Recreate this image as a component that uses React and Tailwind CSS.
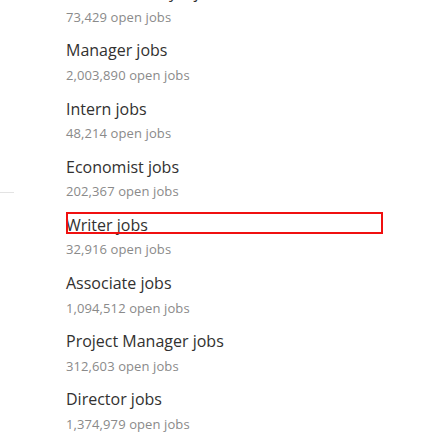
const JOBS = [
  { title: 'Business Analyst jobs', count: '73,429' },
  { title: 'Manager jobs', count: '2,003,890' },
  { title: 'Intern jobs', count: '48,214' },
  { title: 'Economist jobs', count: '202,367' },
  { title: 'Writer jobs', count: '32,916', highlight: true },
  { title: 'Associate jobs', count: '1,094,512' },
  { title: 'Project Manager jobs', count: '312,603' },
  { title: 'Director jobs', count: '1,374,979' },
];

function JobRow({ title, count, highlight }) {
  return (
    <li className="pb-[11.7px]">
      <div className="relative text-[16px] leading-6 font-medium text-[#323130]">
        {title}
        {highlight && (
          <span className="absolute left-0 right-0 top-[-0.5px] h-[22px] border-2 border-[#f01010]" />
        )}
      </div>
      <div className="mt-[2.5px] text-[13px] leading-5 font-normal tracking-[0.1px] text-[#8a8a8a]">{count} open jobs</div>
    </li>
  );
}

export default function App() {
  return (
    <div
      className="flex h-[448px] w-[448px] overflow-hidden bg-white"
      style={{ fontFamily: '"Open Sans", "Noto Sans", sans-serif' }}
    >
      <div className="w-[66px] shrink-0">
        <div className="mt-[192px] h-px w-[14px] bg-[#e3e3e3]" />
      </div>
      <ul className="mt-[-19.85px] w-[317px]">
        {JOBS.map(job => (
          <JobRow key={job.title} {...job} />
        ))}
      </ul>
    </div>
  );
}
